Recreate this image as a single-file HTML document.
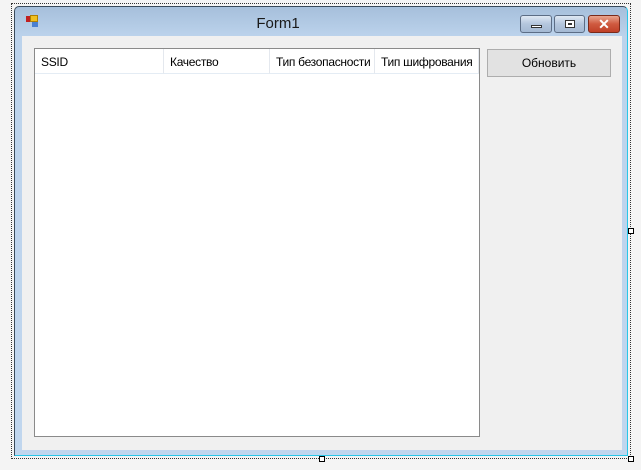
<!DOCTYPE html><html><head><style>
body{margin:0;width:641px;height:470px;background:#f4f4f4;position:relative;overflow:hidden;font-family:"Liberation Sans",sans-serif}
.a{position:absolute;box-sizing:border-box}
.sel{left:11px;top:3px;width:620px;height:456px;border:1px dotted #333}
.frame{left:14px;top:6px;width:614px;height:450px;background:linear-gradient(#a6bfdb,#bcd3ec 30px,#c0d6ee);border:1px solid #3a4a5a;border-radius:5px 5px 0 0;border-bottom:1px solid #29c6e8;border-right:1px solid #29c6e8}
.client{left:22px;top:36px;width:600px;height:414px;background:#f0f0f0}
.lv{left:34px;top:48px;width:446px;height:389px;background:#fff;border:1px solid #8a8a8a}
.hd{top:0;height:25px;font-size:12px;line-height:27px;color:#000;border-right:1px solid #e4e8ee;padding-left:6px;border-bottom:1px solid #e4ecf4;white-space:nowrap;overflow:hidden;letter-spacing:-0.3px}
.btn{left:487px;top:49px;width:124px;height:28px;border:1px solid #adadad;background:#e2e2e2;font-size:12px;text-align:center;line-height:26px}
.wb{top:15px;height:18px;border:1px solid #5c6d85;border-radius:3px;background:linear-gradient(#dfe8f3,#b4c6dd 50%,#a4b9d3)}
.h{width:6px;height:6px;border:1px solid #000;background:#fff}
</style></head><body>
<div class="a sel"></div>
<div class="a frame"></div>
<div class="a" style="left:26px;top:16px;width:6px;height:6px;background:#c02020"></div>
<div class="a" style="left:30px;top:15px;width:8px;height:7px;background:#f0c020;border:1px solid #b08000"></div>
<div class="a" style="left:32px;top:22px;width:6px;height:5px;background:#4a80d0"></div>
<div class="a" style="left:230px;top:15px;width:96px;text-align:center;font-size:15px;color:#1a1a1a">Form1</div>
<div class="a wb" style="left:520px;width:32px"><div class="a" style="left:10px;top:9px;width:11px;height:3px;border:1px solid #333;background:#fff"></div></div>
<div class="a wb" style="left:554px;width:31px"><div class="a" style="left:10px;top:4px;width:10px;height:8px;border:1px solid #333;background:#fff"><div class="a" style="left:2px;top:2px;width:4px;height:2px;border:1px solid #333"></div></div></div>
<div class="a wb" style="left:588px;width:32px;background:linear-gradient(#e9a58f,#cf5a3f 50%,#c04028);border-color:#7a2a1a;color:#fff;font-weight:bold;font-size:14px;text-align:center;line-height:16px">✕</div>
<div class="a client"></div>
<div class="a lv">
<div class="a hd" style="left:0;width:129px">SSID</div>
<div class="a hd" style="left:129px;width:106px">Качество</div>
<div class="a hd" style="left:235px;width:105px">Тип безопасности</div>
<div class="a hd" style="left:340px;width:104px">Тип шифрования</div>
</div>
<div class="a btn">Обновить</div>
<div class="a h" style="left:628px;top:228px"></div>
<div class="a h" style="left:319px;top:456px"></div>
<div class="a h" style="left:628px;top:456px"></div>
</body></html>
